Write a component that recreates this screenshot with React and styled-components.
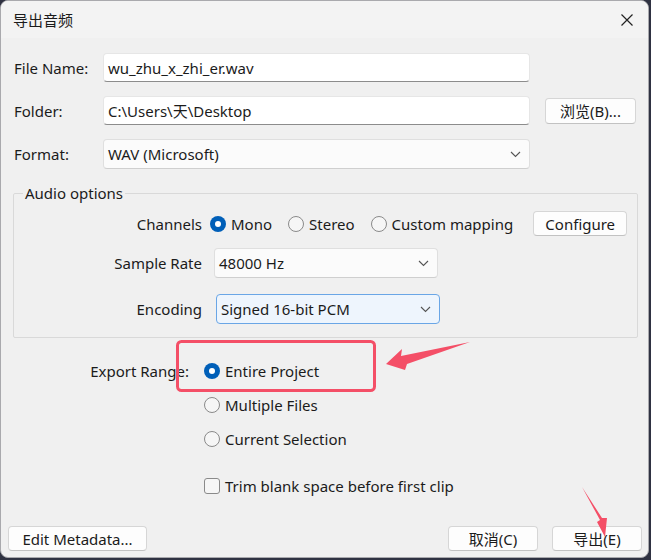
import React from "react";
import styled, { createGlobalStyle } from "styled-components";

const GlobalStyle = createGlobalStyle`
  html, body {
    margin: 0;
    width: 651px;
    height: 560px;
    overflow: hidden;
    background: #2f3242;
  }
  body {
    font-family: "Noto Sans", "Noto Sans CJK SC", sans-serif;
    font-size: 15px;
    color: #1b1b1b;
  }
`;

const Window = styled.div`
  position: relative;
  box-sizing: border-box;
  width: 649px;
  height: 558px;
  background: #f0f0f0;
  border: 1px solid #a9a9ad;
  border-radius: 8px;
  overflow: hidden;
  display: flex;
  flex-direction: column;
`;

const TitleBar = styled.div`
  height: 37px;
  flex: none;
  display: flex;
  align-items: center;
  justify-content: space-between;
  padding: 0 14px 0 12px;
  background: #f3f3f3;
  font-family: "Noto Sans CJK SC", sans-serif;
  font-size: 15px;
`;

const CloseButton = styled.span`
  display: flex;
  width: 14px;
  height: 14px;
`;

const FieldGrid = styled.div`
  display: grid;
  grid-template-columns: 74px 427px 91px;
  column-gap: 15px;
  row-gap: 14px;
  align-items: center;
  padding: 15px 0 0 13px;
`;

const FieldLabel = styled.label`
  white-space: nowrap;
`;

const TextInput = styled.div`
  box-sizing: border-box;
  height: 29px;
  display: flex;
  align-items: center;
  padding: 0 4px;
  background: #ffffff;
  border: 1px solid #e6e6e6;
  border-bottom-color: #8c8c8c;
  border-radius: 4px;
  font-family: "Noto Sans", "Noto Sans CJK SC", sans-serif;
`;

const Select = styled.div`
  box-sizing: border-box;
  height: ${(p) => p.$height || 30}px;
  width: ${(p) => (p.$width ? `${p.$width}px` : "auto")};
  margin-left: ${(p) => p.$offset || 0}px;
  display: flex;
  align-items: center;
  justify-content: space-between;
  padding: 0 8px 0 4px;
  background: ${(p) => (p.$focused ? "#eef5fd" : "#fbfbfb")};
  border: 1px solid ${(p) => (p.$focused ? "#6aa6e6" : "#dfdfdf")};
  border-bottom-color: ${(p) => (p.$focused ? "#6aa6e6" : "#cfcfcf")};
  border-radius: 4px;
`;

const Button = styled.button`
  box-sizing: border-box;
  height: ${(p) => p.$height || 25}px;
  width: ${(p) => p.$width}px;
  padding: 0;
  background: #fdfdfd;
  border: 1px solid #d6d6d6;
  border-bottom-color: #c2c2c2;
  border-radius: 4px;
  font-family: "Noto Sans", "Noto Sans CJK SC", sans-serif;
  font-size: 15px;
  color: #1b1b1b;
  margin-left: ${(p) => p.$offset || 0}px;
`;

const GroupBox = styled.fieldset`
  margin: 14px 10px 0 12px;
  padding: 0 0 13px 0;
  border: 1px solid #d9d9d9;
  border-radius: 2px;
  min-width: 0;
`;

const Legend = styled.legend`
  margin-left: 9px;
  padding: 0 2px;
  line-height: 20px;
`;

const OptionGrid = styled.div`
  display: grid;
  grid-template-columns: 188px auto;
  column-gap: 8px;
  align-items: center;
`;

const OptionLabel = styled.span`
  text-align: right;
  margin-top: ${(p) => p.$top || 0}px;
`;

const OptionControl = styled.div`
  display: flex;
  align-items: center;
  margin-top: ${(p) => p.$top || 0}px;
`;

const RadioGroup = styled.div`
  display: flex;
  align-items: center;
  gap: 16px;
`;

const RadioItem = styled.label`
  display: flex;
  align-items: center;
  gap: 5px;
  white-space: nowrap;
`;

const RadioCircle = styled.span`
  box-sizing: border-box;
  width: 16px;
  height: 16px;
  border-radius: 50%;
  flex: none;
  background: ${(p) => (p.$checked ? "#005fb8" : "#f6f6f6")};
  border: ${(p) => (p.$checked ? "none" : "1px solid #8a8a8a")};
  display: flex;
  align-items: center;
  justify-content: center;
  &::after {
    content: "";
    display: ${(p) => (p.$checked ? "block" : "none")};
    width: 6px;
    height: 6px;
    border-radius: 50%;
    background: #ffffff;
  }
`;

const CheckBox = styled.span`
  box-sizing: border-box;
  width: 16px;
  height: 16px;
  flex: none;
  border: 1px solid #8a8a8a;
  border-radius: 3px;
  background: #f6f6f6;
`;

const RangeGrid = styled.div`
  display: grid;
  grid-template-columns: 188px auto;
  column-gap: 15px;
  row-gap: 10px;
  align-items: center;
  margin-top: 21px;
`;

const RangeRow = styled.div`
  height: 24px;
  display: flex;
  align-items: center;
  grid-column: 2;
  margin-top: ${(p) => p.$top || 0}px;
`;

const RangeLabel = styled.span`
  grid-column: 1;
  text-align: right;
`;

const Footer = styled.div`
  margin-top: auto;
  display: flex;
  align-items: center;
  padding: 0 6px 6px 7px;
`;

const FooterRight = styled.div`
  margin-left: auto;
  display: flex;
  gap: 14px;
`;

const Annotation = styled.svg`
  position: absolute;
  left: -1px;
  top: -1px;
  pointer-events: none;
`;

const Chevron = () => (
  <svg width="11" height="7" viewBox="0 0 11 7">
    <path d="M1 1 L5.5 5.5 L10 1" fill="none" stroke="#555" strokeWidth="1.1" />
  </svg>
);

const Radio = ({ checked, children }) => (
  <RadioItem>
    <RadioCircle $checked={checked} />
    {children}
  </RadioItem>
);

export default function App() {
  return (
    <>
      <GlobalStyle />
      <Window>
        <TitleBar>
          <span>导出音频</span>
          <CloseButton>
            <svg width="14" height="14" viewBox="0 0 14 14">
              <path d="M1.5 1.5 L12.5 12.5 M12.5 1.5 L1.5 12.5" stroke="#222" strokeWidth="1.2" />
            </svg>
          </CloseButton>
        </TitleBar>

        <FieldGrid>
          <FieldLabel>File Name:</FieldLabel>
          <TextInput>wu_zhu_x_zhi_er.wav</TextInput>
          <span />
          <FieldLabel>Folder:</FieldLabel>
          <TextInput>C:\Users\天\Desktop</TextInput>
          <Button $width={91} $height={26}>浏览(B)...</Button>
          <FieldLabel>Format:</FieldLabel>
          <Select>
            <span>WAV (Microsoft)</span>
            <Chevron />
          </Select>
          <span />
        </FieldGrid>

        <GroupBox>
          <Legend>Audio options</Legend>
          <OptionGrid>
            <OptionLabel $top={8}>Channels</OptionLabel>
            <OptionControl $top={8}>
              <RadioGroup>
                <Radio checked>Mono</Radio>
                <Radio>Stereo</Radio>
                <Radio>Custom mapping</Radio>
              </RadioGroup>
              <Button $width={94} $offset={20}>Configure</Button>
            </OptionControl>
            <OptionLabel $top={12}>Sample Rate</OptionLabel>
            <OptionControl $top={12}>
              <Select $width={224} $offset={4}>
                <span>48000 Hz</span>
                <Chevron />
              </Select>
            </OptionControl>
            <OptionLabel $top={16}>Encoding</OptionLabel>
            <OptionControl $top={16}>
              <Select $width={224} $offset={6} $focused>
                <span>Signed 16-bit PCM</span>
                <Chevron />
              </Select>
            </OptionControl>
          </OptionGrid>
        </GroupBox>

        <RangeGrid>
          <RangeLabel>Export Range:</RangeLabel>
          <RangeRow>
            <Radio checked>Entire Project</Radio>
          </RangeRow>
          <RangeRow>
            <Radio>Multiple Files</Radio>
          </RangeRow>
          <RangeRow>
            <Radio>Current Selection</Radio>
          </RangeRow>
          <RangeRow $top={13}>
            <RadioItem>
              <CheckBox />
              Trim blank space before first clip
            </RadioItem>
          </RangeRow>
        </RangeGrid>

        <Footer>
          <Button $width={139}>Edit Metadata...</Button>
          <FooterRight>
            <Button $width={90}>取消(C)</Button>
            <Button $width={90}>导出(E)</Button>
          </FooterRight>
        </Footer>

        <Annotation width="651" height="560" viewBox="0 0 651 560">
          <rect x="177.5" y="341.5" width="197" height="49" rx="4" fill="none" stroke="#f44f67" strokeWidth="3" />
          <polygon points="386,364 402,349 401,356 470,342 407,364 405,370" fill="#f44f67" />
          <polygon points="582,487 602,518 607,518 605,537 597,522 600,520" fill="#f44f67" />
        </Annotation>
      </Window>
    </>
  );
}
